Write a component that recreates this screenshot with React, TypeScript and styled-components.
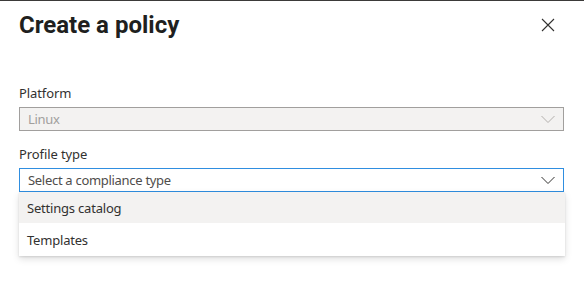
import React from 'react'
import styled, { createGlobalStyle } from 'styled-components'

const GlobalStyle = createGlobalStyle`
  html, body {
    margin: 0;
    padding: 0;
    background: #ffffff;
  }
  body {
    font-family: 'Noto Sans', 'Open Sans', sans-serif;
    color: #323130;
  }
`

const Panel = styled.div`
  width: 584px;
  height: 286px;
  border-top: 1px solid #3b3a39;
  background: #ffffff;
`

const Header = styled.div`
  display: flex;
  align-items: flex-start;
  justify-content: space-between;
  padding: 8px 29px 0 19px;
  height: 40px;
`

const Title = styled.h1`
  margin: 0;
  font-family: Roboto, 'Liberation Sans', sans-serif;
  font-weight: 700;
  font-size: 24px;
  line-height: 32px;
  color: #201f1e;
`

const CloseButton = styled.button`
  border: 0;
  background: transparent;
  padding: 0;
  margin-top: 9px;
  width: 14px;
  height: 14px;
  display: flex;
  cursor: pointer;
`

const Form = styled.div`
  display: flex;
  flex-direction: column;
  padding: 34px 0 0 19px;
  width: 545px;
`

const Field = styled.div`
  display: flex;
  flex-direction: column;
  position: relative;
  margin-bottom: 13px;
`

const Label = styled.label`
  font-size: 13px;
  line-height: 20px;
  height: 24px;
  letter-spacing: -0.1px;
  color: #323130;
`

const SelectBox = styled.div<{ $disabled?: boolean; $focused?: boolean }>`
  box-sizing: border-box;
  height: 24px;
  display: flex;
  align-items: center;
  justify-content: space-between;
  padding: 0 7px 0 8px;
  font-size: 13px;
  letter-spacing: -0.3px;
  border: 1px solid
    ${(p) => (p.$disabled ? '#a19f9d' : p.$focused ? '#2f8ee0' : '#8a8886')};
  background: ${(p) => (p.$disabled ? '#f3f2f1' : '#ffffff')};
  color: ${(p) => (p.$disabled ? '#a19f9d' : '#4f4d4b')};
`

const Menu = styled.div`
  position: absolute;
  top: 48px;
  left: 0;
  width: 546px;
  background: #ffffff;
  box-shadow: 0 3px 7px rgba(0, 0, 0, 0.13), 0 0.6px 1.8px rgba(0, 0, 0, 0.11);
  display: flex;
  flex-direction: column;
`

const MenuItem = styled.div<{ $active?: boolean }>`
  height: ${(p) => (p.$active ? 31 : 33)}px;
  display: flex;
  align-items: center;
  padding-left: 8px;
  font-size: 13px;
  letter-spacing: -0.2px;
  color: #323130;
  background: ${(p) => (p.$active ? '#f3f2f1' : '#ffffff')};
`

const Chevron = ({ color }: { color: string }) => (
  <svg width="16" height="10" viewBox="0 0 16 10">
    <path d="M1.5 2 L8 8.5 L14.5 2" fill="none" stroke={color} strokeWidth="1" />
  </svg>
)

const CloseIcon = () => (
  <svg width="14" height="14" viewBox="0 0 14 14">
    <path d="M1 1 L13 13 M13 1 L1 13" stroke="#323130" strokeWidth="1.1" />
  </svg>
)

export default function App() {
  return (
    <>
      <GlobalStyle />
      <Panel>
        <Header>
          <Title>Create a policy</Title>
          <CloseButton aria-label="Close">
            <CloseIcon />
          </CloseButton>
        </Header>
        <Form>
          <Field>
            <Label>Platform</Label>
            <SelectBox $disabled>
              <span>Linux</span>
              <Chevron color="#b3b0ad" />
            </SelectBox>
          </Field>
          <Field>
            <Label>Profile type</Label>
            <SelectBox $focused>
              <span>Select a compliance type</span>
              <Chevron color="#323130" />
            </SelectBox>
            <Menu>
              <MenuItem $active>Settings catalog</MenuItem>
              <MenuItem>Templates</MenuItem>
            </Menu>
          </Field>
        </Form>
      </Panel>
    </>
  )
}
